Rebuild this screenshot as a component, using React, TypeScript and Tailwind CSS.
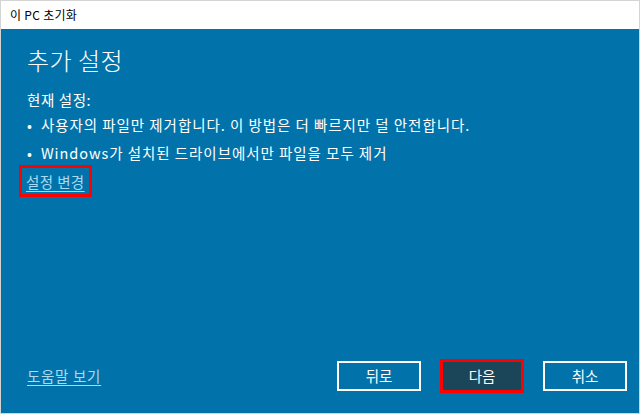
export default function App() {
  const font = { fontFamily: '"Noto Sans CJK KR", "Noto Sans", sans-serif' }
  return (
    <div
      className="flex h-[414px] w-[640px] flex-col border border-[#d4d4d4] bg-[#0173aa]"
      style={font}
    >
      {/* Title bar */}
      <div className="flex h-[28px] items-center bg-white pl-[9px] text-[12px] tracking-[0.3px] text-black">
        이 PC 초기화
      </div>

      {/* Content */}
      <div className="flex flex-1 flex-col pl-[26px] pr-[12px] text-white">
        <h1 className="mt-[13px] text-[24px] font-light leading-[36px] tracking-[0.5px]">추가 설정</h1>

        <p className="mt-[12px] text-[14.5px] leading-[20px] tracking-[0.6px]">현재 설정:</p>
        <ul className="mt-[5px] flex flex-col gap-[8px] text-[14.5px] leading-[20px] tracking-[0.95px]">
          <li className="flex gap-[8px]">
            <span>•</span>
            <span>사용자의 파일만 제거합니다. 이 방법은 더 빠르지만 덜 안전합니다.</span>
          </li>
          <li className="flex gap-[8px]">
            <span>•</span>
            <span>Windows가 설치된 드라이브에서만 파일을 모두 제거</span>
          </li>
        </ul>

        <div className="-ml-[8px] mt-[2px] self-start border-[3px] border-[#ff0000] px-[4px] py-[1px]">
          <a className="text-[14.5px] leading-[20px] tracking-[0.4px] text-[#a9daf2] underline underline-offset-[3px]">
            설정 변경
          </a>
        </div>

        <div className="mt-auto mb-[20px] flex items-center">
          <a className="text-[14.5px] leading-[20px] tracking-[0.7px] text-[#a9daf2] underline underline-offset-[3px]">
            도움말 보기
          </a>
          <div className="ml-auto flex items-center gap-[19px]">
            <button className="h-[30px] w-[84px] border-2 border-white text-[14.5px] text-white">
              뒤로
            </button>
            <button className="h-[34px] w-[84px] border-[3px] border-[#ff0000] bg-[#1b4659] text-[14.5px] text-white">
              다음
            </button>
            <button className="h-[30px] w-[84px] border-2 border-white text-[14.5px] text-white">
              취소
            </button>
          </div>
        </div>
      </div>
    </div>
  )
}
